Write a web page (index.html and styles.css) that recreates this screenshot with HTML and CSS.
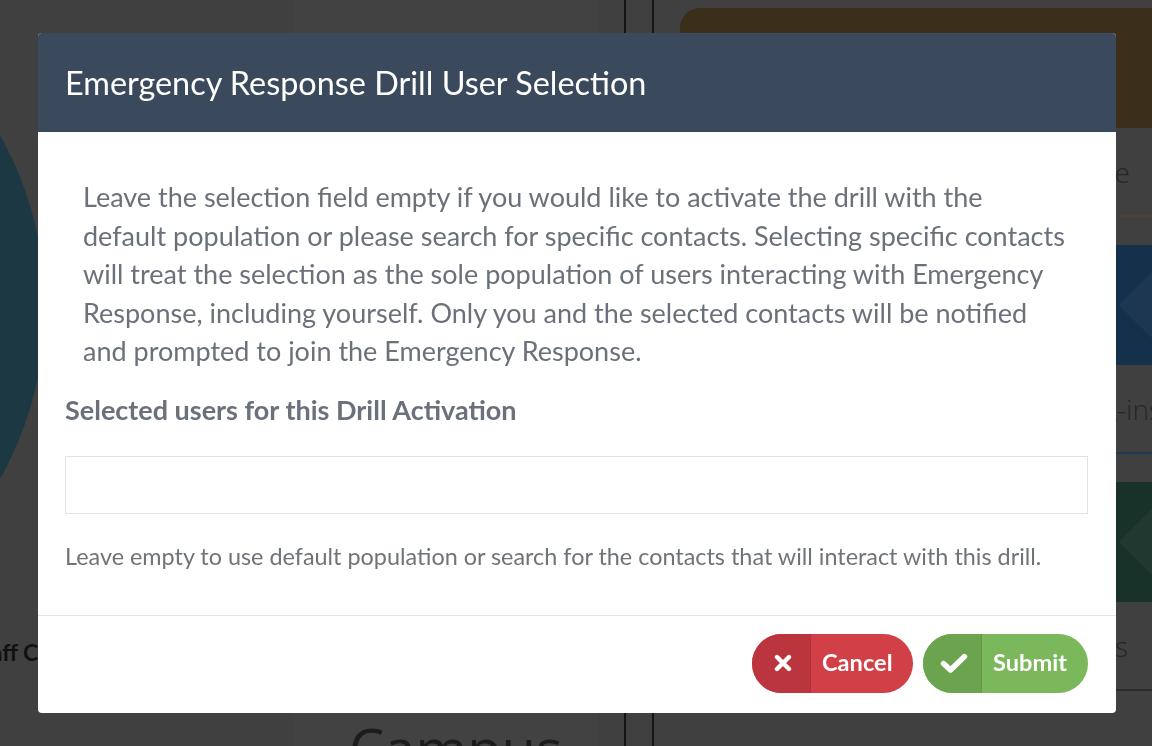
FILE: index.html
```html
<!DOCTYPE html>
<html lang="en">
<head>
<meta charset="utf-8">
<title>Emergency Response Drill User Selection</title>
<link rel="stylesheet" href="styles.css">
</head>
<body>
<div class="backdrop">
  <div class="col-left">
    <div class="circle"></div>
    <div class="staff-label">Staff C</div>
  </div>
  <div class="col-mid">
    <div class="campus">Campus</div>
  </div>
  <div class="gap"></div>
  <div class="vline"></div>
  <div class="gap"></div>
  <div class="vline"></div>
  <div class="gap"></div>
  <div class="col-right">
    <div class="card card-gold">
      <div class="card-box"></div>
      <div class="card-text">Initiate</div>
    </div>
    <div class="card card-blue">
      <div class="card-box"><span class="diamond"></span></div>
      <div class="card-text">Check-ins</div>
    </div>
    <div class="card card-green">
      <div class="card-box"><span class="diamond"></span></div>
      <div class="card-text">Contacts</div>
    </div>
  </div>
</div>

<div class="overlay">
  <div class="modal">
    <div class="modal-header">
      <h1 class="modal-title">Emergency Response Drill User Selection</h1>
    </div>
    <div class="modal-body">
      <p class="intro">Leave the selection field empty if you would like to activate the drill with the<br>default population or please search for specific contacts. Selecting specific contacts<br>will treat the selection as the sole population of users interacting with Emergency<br>Response, including yourself. Only you and the selected contacts will be notified<br>and prompted to join the Emergency Response.</p>
      <label class="field-label" for="users">Selected users for this Drill Activation</label>
      <input class="field-input" id="users" type="text">
      <p class="help">Leave empty to use default population or search for the contacts that will interact with this drill.</p>
    </div>
    <div class="modal-footer">
      <button class="btn btn-cancel" type="button">
        <span class="btn-icon">
          <svg width="18" height="18" viewBox="0 0 18 18"><path d="M3 3 L15 15 M15 3 L3 15" stroke="#fff" stroke-width="4.4" stroke-linecap="round" fill="none"/></svg>
        </span>
        <span class="btn-text">Cancel</span>
      </button>
      <button class="btn btn-submit" type="button">
        <span class="btn-icon">
          <svg width="28" height="20" viewBox="0 0 28 20"><polyline points="3.5,10.5 10.5,17 24.5,3.5" stroke="#fff" stroke-width="5.4" stroke-linecap="round" stroke-linejoin="round" fill="none"/></svg>
        </span>
        <span class="btn-text">Submit</span>
      </button>
    </div>
  </div>
</div>
</body>
</html>
```

FILE: styles.css
```css
* { box-sizing: border-box; }

html, body {
  margin: 0;
  padding: 0;
  width: 1152px;
  height: 746px;
  overflow: hidden;
  background: #404040;
  font-family: "Lato", "Open Sans", sans-serif;
}

/* dimmed page behind the dialog */
.backdrop {
  display: flex;
  width: 1152px;
  height: 746px;
  overflow: hidden;
}

.col-left {
  flex: 0 0 293px;
  display: flex;
  flex-direction: column;
}

.circle {
  flex: 0 0 702px;
  width: 702px;
  height: 702px;
  margin: -44px 0 -20px -657px;
  border-radius: 50%;
  background: #1c3842;
}

.staff-label {
  margin-left: -30px;
  font-weight: 700;
  font-size: 23px;
  line-height: 28px;
  color: #111;
  white-space: nowrap;
}

.col-mid {
  flex: 0 0 305px;
  background: #424242;
  display: flex;
  flex-direction: column;
  justify-content: flex-end;
}

.campus {
  margin: 0 0 -40px 56px;
  font-family: "Open Sans", sans-serif;
  font-weight: 400;
  font-size: 56px;
  line-height: 76px;
  color: #1c1c1c;
}

.gap { flex: 0 0 26px; }

.vline {
  flex: 0 0 2px;
  background: #161616;
}

.col-right {
  flex: 0 0 520px;
  display: flex;
  flex-direction: column;
  gap: 28px;
  padding-top: 8px;
}

.card {
  display: flex;
  flex-direction: column;
}

.card-box {
  height: 120px;
  border-radius: 20px 20px 0 0;
  position: relative;
  overflow: hidden;
}

.diamond {
  position: absolute;
  left: 455px;
  top: 20px;
  width: 80px;
  height: 80px;
  transform: rotate(45deg);
  background: rgba(255, 255, 255, 0.035);
}

.card-text {
  height: 89px;
  font-family: "Open Sans", sans-serif;
  font-weight: 300;
  font-size: 28px;
  line-height: 89px;
  color: #262626;
  text-align: right;
  white-space: nowrap;
  border-bottom: 2px solid #2a2a2a;
}

.card-gold .card-box { background: #3b2e1a; }
.card-gold .card-text { padding-right: 70px; border-bottom-color: #4b4231; }

.card-blue .card-box { background: #15304a; }
.card-blue .card-text { padding-right: 38px; border-bottom-color: #1e3a5a; }

.card-green .card-box { background: #183129; }
.card-green .card-text { padding-right: 72px; border-bottom-color: #2c2c2c; }

/* dialog */
.overlay {
  position: fixed;
  inset: 0;
  display: flex;
  justify-content: center;
  align-items: flex-start;
  padding: 33px 0 0 2px;
}

.modal {
  width: 1078px;
  background: #fff;
  border-radius: 4px;
  overflow: hidden;
}

.modal-header {
  height: 99px;
  background: #3a4a5c;
  padding: 0 27px;
  display: flex;
  align-items: center;
}

.modal-title {
  margin: 0;
  font-weight: 400;
  font-size: 32.4px;
  line-height: 36px;
  color: #fff;
}

.modal-body {
  padding: 46px 28px 44px 27px;
  display: flex;
  flex-direction: column;
}

.intro {
  margin: 0 0 24px;
  padding: 0 0 0 18px;
  font-size: 27px;
  line-height: 38.5px;
  color: #6b717b;
  white-space: nowrap;
}

.field-label {
  font-weight: 700;
  font-size: 27px;
  line-height: 29px;
  color: #6b717b;
}

.field-input {
  margin-top: 32px;
  height: 58px;
  width: 100%;
  border: 1px solid #e3e3e3;
  border-radius: 0;
  background: #fff;
  font-family: inherit;
  font-size: 20px;
  padding: 0 12px;
  outline: none;
}

.help {
  margin: 27px 0 0;
  font-size: 23.4px;
  line-height: 30px;
  color: #6f7479;
}

.modal-footer {
  border-top: 1px solid #e5e5e5;
  padding: 18px 28px 20px;
  display: flex;
  justify-content: flex-end;
  gap: 10px;
}

.btn {
  height: 59px;
  border: 0;
  padding: 0;
  border-radius: 30px;
  overflow: hidden;
  display: flex;
  align-items: stretch;
  font-family: inherit;
  font-weight: 700;
  font-size: 23.6px;
  color: #fff;
  cursor: pointer;
}

.btn-icon {
  width: 59px;
  flex: 0 0 59px;
  display: flex;
  align-items: center;
  justify-content: center;
  padding-left: 4px;
  border-right: 1px solid rgba(0, 0, 0, 0.06);
}

.btn-text {
  display: flex;
  align-items: center;
  padding: 0 0 2px 11px;
}

.btn-cancel { background: #d13f47; width: 161px; }
.btn-cancel .btn-icon { background: #bb353e; }

.btn-submit { background: #7bb75b; width: 165px; }
.btn-submit .btn-icon { background: #6ba34f; }
```
